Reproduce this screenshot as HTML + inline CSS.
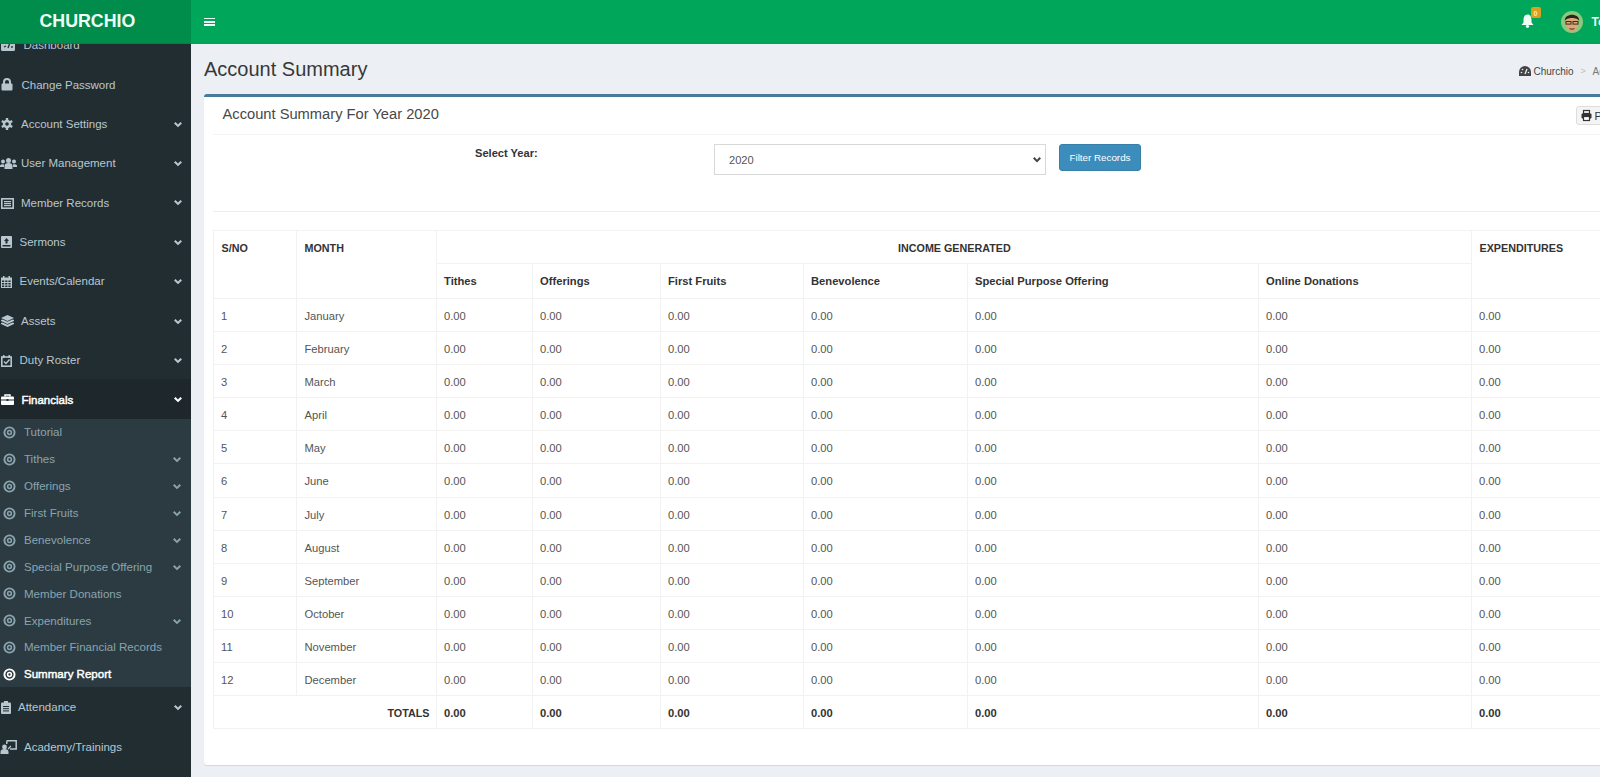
<!DOCTYPE html>
<html><head><meta charset="utf-8"><style>
*{box-sizing:border-box;margin:0;padding:0}
html,body{width:1600px;height:777px;overflow:hidden;background:#ecf0f5;font-family:"Liberation Sans",sans-serif;color:#333}
.a{position:absolute;white-space:nowrap;line-height:1}
svg.a{overflow:visible}
</style></head><body>
<div class="a" style="left:0.00px;top:44.00px;width:191.00px;height:733.00px;background:#222d32;"></div>
<div class="a" style="left:0.00px;top:379.00px;width:191.00px;height:40.00px;background:#1e282c;"></div>
<div class="a" style="left:0.00px;top:419.00px;width:191.00px;height:268.00px;background:#2c3b41;"></div>
<svg class="a" style="left:1px;top:39.50px" width="14" height="11" viewBox="0 0 14 11"><rect x="0" y="0" width="14" height="11" rx="1.5" fill="#b8c7ce"/><path d="M3 7 L5 6 M7 8 L8.5 4" stroke="#222d32" stroke-width="1.3"/><circle cx="11" cy="7" r="0.9" fill="#222d32"/></svg>
<div class="a" style="left:23.50px;top:40.17px;font-size:11.5px;font-weight:normal;color:#b8c7ce;">Dashboard</div>
<svg class="a" style="left:1px;top:78.40px" width="12" height="13"><path d="M3 6 V4 A3 3 0 0 1 9 4 V6" fill="none" stroke="#b8c7ce" stroke-width="2"/><rect x="0.5" y="5.5" width="11" height="7" rx="1" fill="#b8c7ce"/></svg>
<div class="a" style="left:21.50px;top:79.57px;font-size:11.5px;font-weight:normal;color:#b8c7ce;">Change Password</div>
<svg class="a" style="left:1px;top:118.30px" width="12" height="12" viewBox="0 0 12 12"><circle cx="6" cy="6" r="4.2" fill="#b8c7ce"/><rect x="4.8" y="0" width="2.4" height="12" fill="#b8c7ce" transform="rotate(0 6 6)"/><rect x="4.8" y="0" width="2.4" height="12" fill="#b8c7ce" transform="rotate(60 6 6)"/><rect x="4.8" y="0" width="2.4" height="12" fill="#b8c7ce" transform="rotate(120 6 6)"/><circle cx="6" cy="6" r="1.8" fill="#222d32"/></svg>
<div class="a" style="left:21.00px;top:118.97px;font-size:11.5px;font-weight:normal;color:#b8c7ce;">Account Settings</div>
<svg class="a" style="left:174.00px;top:121.70px" width="8" height="5.2" viewBox="0 0 8 5.2"><path d="M0 1.51 L1.51 0 L4.00 2.63 L6.49 0 L8 1.51 L4.00 5.2 Z" fill="#b8c7ce"/></svg>
<svg class="a" style="left:0px;top:158.20px" width="17" height="11" viewBox="0 0 17 11"><circle cx="8.5" cy="2.6" r="2.5" fill="#b8c7ce"/><circle cx="3" cy="3.5" r="2" fill="#b8c7ce"/><circle cx="14" cy="3.5" r="2" fill="#b8c7ce"/><path d="M4.5 11 V8 A4 3 0 0 1 12.5 8 V11 Z" fill="#b8c7ce"/><path d="M0 9 V7.5 A3 2 0 0 1 4 6.5 V9Z" fill="#b8c7ce"/><path d="M13 6.5 A3 2 0 0 1 17 7.5 V9 H13Z" fill="#b8c7ce"/></svg>
<div class="a" style="left:21.00px;top:158.37px;font-size:11.5px;font-weight:normal;color:#b8c7ce;">User Management</div>
<svg class="a" style="left:174.00px;top:161.10px" width="8" height="5.2" viewBox="0 0 8 5.2"><path d="M0 1.51 L1.51 0 L4.00 2.63 L6.49 0 L8 1.51 L4.00 5.2 Z" fill="#b8c7ce"/></svg>
<svg class="a" style="left:1px;top:197.50px" width="13" height="11" viewBox="0 0 13 11"><rect x="0.8" y="0.8" width="11.4" height="9.4" fill="none" stroke="#b8c7ce" stroke-width="1.6"/><rect x="3" y="3" width="7" height="1.2" fill="#b8c7ce"/><rect x="3" y="5" width="7" height="1.2" fill="#b8c7ce"/><rect x="3" y="7" width="7" height="1.2" fill="#b8c7ce"/></svg>
<div class="a" style="left:21.00px;top:197.67px;font-size:11.5px;font-weight:normal;color:#b8c7ce;">Member Records</div>
<svg class="a" style="left:174.00px;top:200.40px" width="8" height="5.2" viewBox="0 0 8 5.2"><path d="M0 1.51 L1.51 0 L4.00 2.63 L6.49 0 L8 1.51 L4.00 5.2 Z" fill="#b8c7ce"/></svg>
<svg class="a" style="left:1px;top:236.40px" width="11" height="12" viewBox="0 0 11 12"><rect x="0" y="0" width="11" height="12" rx="1" fill="#b8c7ce"/><rect x="1.5" y="9" width="8" height="1.5" fill="#222d32"/><path d="M5.5 2 L8 5 H6.5 V7.5 H4.5 V5 H3Z" fill="#222d32"/></svg>
<div class="a" style="left:19.50px;top:237.07px;font-size:11.5px;font-weight:normal;color:#b8c7ce;">Sermons</div>
<svg class="a" style="left:174.00px;top:239.80px" width="8" height="5.2" viewBox="0 0 8 5.2"><path d="M0 1.51 L1.51 0 L4.00 2.63 L6.49 0 L8 1.51 L4.00 5.2 Z" fill="#b8c7ce"/></svg>
<svg class="a" style="left:1px;top:275.80px" width="11" height="12" viewBox="0 0 11 12"><rect x="0" y="1.5" width="11" height="10.5" fill="#b8c7ce"/><rect x="2" y="0" width="1.5" height="2.5" fill="#b8c7ce"/><rect x="7.5" y="0" width="1.5" height="2.5" fill="#b8c7ce"/><rect x="1.0" y="4.5" width="2.2" height="1.5" fill="#222d32"/><rect x="1.0" y="7.0" width="2.2" height="1.5" fill="#222d32"/><rect x="1.0" y="9.5" width="2.2" height="1.5" fill="#222d32"/><rect x="4.2" y="4.5" width="2.2" height="1.5" fill="#222d32"/><rect x="4.2" y="7.0" width="2.2" height="1.5" fill="#222d32"/><rect x="4.2" y="9.5" width="2.2" height="1.5" fill="#222d32"/><rect x="7.4" y="4.5" width="2.2" height="1.5" fill="#222d32"/><rect x="7.4" y="7.0" width="2.2" height="1.5" fill="#222d32"/><rect x="7.4" y="9.5" width="2.2" height="1.5" fill="#222d32"/></svg>
<div class="a" style="left:19.50px;top:276.47px;font-size:11.5px;font-weight:normal;color:#b8c7ce;">Events/Calendar</div>
<svg class="a" style="left:174.00px;top:279.20px" width="8" height="5.2" viewBox="0 0 8 5.2"><path d="M0 1.51 L1.51 0 L4.00 2.63 L6.49 0 L8 1.51 L4.00 5.2 Z" fill="#b8c7ce"/></svg>
<svg class="a" style="left:1px;top:315.20px" width="13" height="12" viewBox="0 0 13 12"><path d="M6.5 0 L13 3 L6.5 6 L0 3Z" fill="#b8c7ce"/><path d="M0 5 L1.5 4.4 L6.5 6.8 L11.5 4.4 L13 5 V6 L6.5 9 L0 6Z" fill="#b8c7ce"/><path d="M0 8 L1.5 7.4 L6.5 9.8 L11.5 7.4 L13 8 V9 L6.5 12 L0 9Z" fill="#b8c7ce"/></svg>
<div class="a" style="left:21.00px;top:315.87px;font-size:11.5px;font-weight:normal;color:#b8c7ce;">Assets</div>
<svg class="a" style="left:174.00px;top:318.60px" width="8" height="5.2" viewBox="0 0 8 5.2"><path d="M0 1.51 L1.51 0 L4.00 2.63 L6.49 0 L8 1.51 L4.00 5.2 Z" fill="#b8c7ce"/></svg>
<svg class="a" style="left:1px;top:354.60px" width="11" height="12" viewBox="0 0 11 12"><rect x="0.8" y="2" width="9.4" height="9.2" fill="none" stroke="#b8c7ce" stroke-width="1.6"/><rect x="2" y="0" width="1.5" height="3" fill="#b8c7ce"/><rect x="7.5" y="0" width="1.5" height="3" fill="#b8c7ce"/><path d="M3 6.5 L5 8.5 L8.5 4.5" fill="none" stroke="#b8c7ce" stroke-width="1.4"/></svg>
<div class="a" style="left:19.50px;top:355.27px;font-size:11.5px;font-weight:normal;color:#b8c7ce;">Duty Roster</div>
<svg class="a" style="left:174.00px;top:358.00px" width="8" height="5.2" viewBox="0 0 8 5.2"><path d="M0 1.51 L1.51 0 L4.00 2.63 L6.49 0 L8 1.51 L4.00 5.2 Z" fill="#b8c7ce"/></svg>
<svg class="a" style="left:1px;top:394.40px" width="13" height="11" viewBox="0 0 13 11"><path d="M4 2.5 V1 H9 V2.5" fill="none" stroke="#fff" stroke-width="1.5"/><rect x="0" y="2.5" width="13" height="8.5" rx="1" fill="#fff"/><rect x="0" y="5.5" width="13" height="1" fill="#222d32"/><rect x="5.5" y="5" width="2" height="2" fill="#222d32"/></svg>
<div class="a" style="left:21.50px;top:394.57px;font-size:11.5px;font-weight:normal;color:#fff;-webkit-text-stroke:0.45px #fff">Financials</div>
<svg class="a" style="left:174.00px;top:397.30px" width="8" height="5.2" viewBox="0 0 8 5.2"><path d="M0 1.51 L1.51 0 L4.00 2.63 L6.49 0 L8 1.51 L4.00 5.2 Z" fill="#fff"/></svg>
<svg class="a" style="left:1px;top:701.30px" width="10" height="13" viewBox="0 0 10 13"><rect x="0" y="1.5" width="10" height="11.5" rx="1" fill="#b8c7ce"/><rect x="3" y="0" width="4" height="3" fill="#b8c7ce"/><rect x="2" y="5.0" width="6" height="1" fill="#222d32"/><rect x="2" y="7.2" width="6" height="1" fill="#222d32"/><rect x="2" y="9.4" width="6" height="1" fill="#222d32"/></svg>
<div class="a" style="left:18.00px;top:702.47px;font-size:11.5px;font-weight:normal;color:#b8c7ce;">Attendance</div>
<svg class="a" style="left:174.00px;top:705.20px" width="8" height="5.2" viewBox="0 0 8 5.2"><path d="M0 1.51 L1.51 0 L4.00 2.63 L6.49 0 L8 1.51 L4.00 5.2 Z" fill="#b8c7ce"/></svg>
<svg class="a" style="left:0px;top:740.10px" width="17" height="14" viewBox="0 0 17 14"><path d="M6.8 0.8 H16.2 V9 H10" fill="none" stroke="#b8c7ce" stroke-width="1.5"/><path d="M6.8 0.8 V4" fill="none" stroke="#b8c7ce" stroke-width="1.5"/><path d="M8 9 L11 6" stroke="#b8c7ce" stroke-width="1.3"/><circle cx="4.5" cy="7" r="2.4" fill="#b8c7ce"/><path d="M0.5 14 V12 A4 3 0 0 1 8.5 12 V14Z" fill="#b8c7ce"/></svg>
<div class="a" style="left:24.00px;top:741.77px;font-size:11.5px;font-weight:normal;color:#b8c7ce;">Academy/Trainings</div>
<svg class="a" style="left:3.3px;top:425.90px" width="13" height="13" viewBox="0 0 13 13"><circle cx="6.5" cy="6.5" r="5.1" fill="none" stroke="#8aa4af" stroke-width="1.9"/><circle cx="6.5" cy="6.5" r="1.9" fill="none" stroke="#8aa4af" stroke-width="1.5"/></svg>
<div class="a" style="left:24.00px;top:427.22px;font-size:11.55px;font-weight:normal;color:#8aa4af;">Tutorial</div>
<svg class="a" style="left:3.3px;top:452.80px" width="13" height="13" viewBox="0 0 13 13"><circle cx="6.5" cy="6.5" r="5.1" fill="none" stroke="#8aa4af" stroke-width="1.9"/><circle cx="6.5" cy="6.5" r="1.9" fill="none" stroke="#8aa4af" stroke-width="1.5"/></svg>
<div class="a" style="left:24.00px;top:454.12px;font-size:11.55px;font-weight:normal;color:#8aa4af;">Tithes</div>
<svg class="a" style="left:173.00px;top:457.10px" width="8" height="5.2" viewBox="0 0 8 5.2"><path d="M0 1.44 L1.44 0 L4.00 2.75 L6.56 0 L8 1.44 L4.00 5.2 Z" fill="#8aa4af"/></svg>
<svg class="a" style="left:3.3px;top:479.70px" width="13" height="13" viewBox="0 0 13 13"><circle cx="6.5" cy="6.5" r="5.1" fill="none" stroke="#8aa4af" stroke-width="1.9"/><circle cx="6.5" cy="6.5" r="1.9" fill="none" stroke="#8aa4af" stroke-width="1.5"/></svg>
<div class="a" style="left:24.00px;top:481.02px;font-size:11.55px;font-weight:normal;color:#8aa4af;">Offerings</div>
<svg class="a" style="left:173.00px;top:484.00px" width="8" height="5.2" viewBox="0 0 8 5.2"><path d="M0 1.44 L1.44 0 L4.00 2.75 L6.56 0 L8 1.44 L4.00 5.2 Z" fill="#8aa4af"/></svg>
<svg class="a" style="left:3.3px;top:506.60px" width="13" height="13" viewBox="0 0 13 13"><circle cx="6.5" cy="6.5" r="5.1" fill="none" stroke="#8aa4af" stroke-width="1.9"/><circle cx="6.5" cy="6.5" r="1.9" fill="none" stroke="#8aa4af" stroke-width="1.5"/></svg>
<div class="a" style="left:24.00px;top:507.92px;font-size:11.55px;font-weight:normal;color:#8aa4af;">First Fruits</div>
<svg class="a" style="left:173.00px;top:510.90px" width="8" height="5.2" viewBox="0 0 8 5.2"><path d="M0 1.44 L1.44 0 L4.00 2.75 L6.56 0 L8 1.44 L4.00 5.2 Z" fill="#8aa4af"/></svg>
<svg class="a" style="left:3.3px;top:533.50px" width="13" height="13" viewBox="0 0 13 13"><circle cx="6.5" cy="6.5" r="5.1" fill="none" stroke="#8aa4af" stroke-width="1.9"/><circle cx="6.5" cy="6.5" r="1.9" fill="none" stroke="#8aa4af" stroke-width="1.5"/></svg>
<div class="a" style="left:24.00px;top:534.82px;font-size:11.55px;font-weight:normal;color:#8aa4af;">Benevolence</div>
<svg class="a" style="left:173.00px;top:537.80px" width="8" height="5.2" viewBox="0 0 8 5.2"><path d="M0 1.44 L1.44 0 L4.00 2.75 L6.56 0 L8 1.44 L4.00 5.2 Z" fill="#8aa4af"/></svg>
<svg class="a" style="left:3.3px;top:560.40px" width="13" height="13" viewBox="0 0 13 13"><circle cx="6.5" cy="6.5" r="5.1" fill="none" stroke="#8aa4af" stroke-width="1.9"/><circle cx="6.5" cy="6.5" r="1.9" fill="none" stroke="#8aa4af" stroke-width="1.5"/></svg>
<div class="a" style="left:24.00px;top:561.72px;font-size:11.55px;font-weight:normal;color:#8aa4af;">Special Purpose Offering</div>
<svg class="a" style="left:173.00px;top:564.70px" width="8" height="5.2" viewBox="0 0 8 5.2"><path d="M0 1.44 L1.44 0 L4.00 2.75 L6.56 0 L8 1.44 L4.00 5.2 Z" fill="#8aa4af"/></svg>
<svg class="a" style="left:3.3px;top:587.30px" width="13" height="13" viewBox="0 0 13 13"><circle cx="6.5" cy="6.5" r="5.1" fill="none" stroke="#8aa4af" stroke-width="1.9"/><circle cx="6.5" cy="6.5" r="1.9" fill="none" stroke="#8aa4af" stroke-width="1.5"/></svg>
<div class="a" style="left:24.00px;top:588.62px;font-size:11.55px;font-weight:normal;color:#8aa4af;">Member Donations</div>
<svg class="a" style="left:3.3px;top:614.20px" width="13" height="13" viewBox="0 0 13 13"><circle cx="6.5" cy="6.5" r="5.1" fill="none" stroke="#8aa4af" stroke-width="1.9"/><circle cx="6.5" cy="6.5" r="1.9" fill="none" stroke="#8aa4af" stroke-width="1.5"/></svg>
<div class="a" style="left:24.00px;top:615.52px;font-size:11.55px;font-weight:normal;color:#8aa4af;">Expenditures</div>
<svg class="a" style="left:173.00px;top:618.50px" width="8" height="5.2" viewBox="0 0 8 5.2"><path d="M0 1.44 L1.44 0 L4.00 2.75 L6.56 0 L8 1.44 L4.00 5.2 Z" fill="#8aa4af"/></svg>
<svg class="a" style="left:3.3px;top:641.10px" width="13" height="13" viewBox="0 0 13 13"><circle cx="6.5" cy="6.5" r="5.1" fill="none" stroke="#8aa4af" stroke-width="1.9"/><circle cx="6.5" cy="6.5" r="1.9" fill="none" stroke="#8aa4af" stroke-width="1.5"/></svg>
<div class="a" style="left:24.00px;top:642.42px;font-size:11.55px;font-weight:normal;color:#8aa4af;">Member Financial Records</div>
<svg class="a" style="left:3.3px;top:668.00px" width="13" height="13" viewBox="0 0 13 13"><circle cx="6.5" cy="6.5" r="5.1" fill="none" stroke="#fff" stroke-width="1.9"/><circle cx="6.5" cy="6.5" r="1.9" fill="none" stroke="#fff" stroke-width="1.5"/></svg>
<div class="a" style="left:24.00px;top:669.32px;font-size:11.55px;font-weight:normal;color:#fff;-webkit-text-stroke:0.45px #fff">Summary Report</div>
<div class="a" style="left:0.00px;top:0.00px;width:191.00px;height:44.00px;background:#008d4c;"></div>
<div class="a" style="left:191.00px;top:0.00px;width:1409.00px;height:44.00px;background:#00a65a;"></div>
<div class="a" style="left:191.00px;top:43.00px;width:1409.00px;height:1.00px;background:#1f9262;"></div>
<div class="a" style="left:0.00px;top:43.00px;width:191.00px;height:1.00px;background:#0b7a45;"></div>
<div class="a" style="left:39.50px;top:13.43px;font-size:17.8px;font-weight:bold;color:#effff5;">CHURCHIO</div>
<div class="a" style="left:204.00px;top:17.50px;width:11.00px;height:1.80px;background:#effff5;"></div>
<div class="a" style="left:204.00px;top:20.80px;width:11.00px;height:1.80px;background:#effff5;"></div>
<div class="a" style="left:204.00px;top:24.10px;width:11.00px;height:1.80px;background:#effff5;"></div>
<svg class="a" style="left:1521px;top:14px" width="13" height="14" viewBox="0 0 13 14"><path d="M6.5 0.5 C3.5 0.5 2.5 3 2.5 6 V8.5 L0.5 11 H12.5 L10.5 8.5 V6 C10.5 3 9.5 0.5 6.5 0.5Z" fill="#effff5"/><circle cx="6.5" cy="12.3" r="1.6" fill="#effff5"/></svg>
<div class="a" style="left:1531.00px;top:7.00px;width:10.00px;height:11.00px;background:#dca020;border-radius:2px"></div>
<div class="a" style="left:1533.50px;top:9.57px;font-size:7px;font-weight:bold;color:#ffe9b0;">0</div>
<svg class="a" style="left:1561px;top:10.5px" width="22" height="22" viewBox="0 0 22 22"><circle cx="11" cy="11" r="11" fill="#8cc77e"/><ellipse cx="11" cy="12.5" rx="6.2" ry="7.8" fill="#dca878"/><path d="M3.8 10 C3 1.5 19 1.5 18.2 10 C17 6 5 6 3.8 10Z" fill="#2a2420"/><rect x="5" y="10.5" width="5" height="2.6" fill="none" stroke="#3a2a20" stroke-width="1"/><rect x="12" y="10.5" width="5" height="2.6" fill="none" stroke="#3a2a20" stroke-width="1"/><path d="M8.5 17.5 Q11 18.8 13.5 17.5" fill="none" stroke="#5a3a2a" stroke-width="1.2"/></svg>
<div class="a" style="left:1591.50px;top:16.04px;font-size:12px;font-weight:bold;color:#effff5;">Tom</div>
<div class="a" style="left:204.00px;top:59.07px;font-size:20px;font-weight:normal;color:#383838;">Account Summary</div>
<svg class="a" style="left:1519px;top:65.5px" width="12" height="10" viewBox="0 0 12 10"><path d="M0 10 V6 A6 6 0 0 1 12 6 V10 Z" fill="#444"/><path d="M6 8 L8 3" stroke="#ecf0f5" stroke-width="1.3"/><circle cx="2.5" cy="6.5" r="0.8" fill="#ecf0f5"/><circle cx="3.5" cy="3.5" r="0.8" fill="#ecf0f5"/><circle cx="9.5" cy="6.5" r="0.8" fill="#ecf0f5"/></svg>
<div class="a" style="left:1533.50px;top:66.53px;font-size:10px;font-weight:normal;color:#444;">Churchio</div>
<div class="a" style="left:1580.50px;top:67.38px;font-size:9px;font-weight:normal;color:#bbb;">&gt;</div>
<div class="a" style="left:1592.50px;top:66.53px;font-size:10px;font-weight:normal;color:#777;">Account Summary</div>
<div class="a" style="left:204.00px;top:94.00px;width:1420.00px;height:671.00px;background:#fff;border-top:3px solid #467c9a;border-radius:3px;box-shadow:0 1px 1px rgba(0,0,0,0.1)"></div>
<div class="a" style="left:222.50px;top:106.96px;font-size:14.7px;font-weight:normal;color:#484848;">Account Summary For Year 2020</div>
<div class="a" style="left:213.00px;top:133.50px;width:1400.00px;height:1.00px;background:#f4f4f4;"></div>
<div class="a" style="left:1576.00px;top:105.50px;width:60.00px;height:19.50px;background:#f4f4f4;border:1px solid #ddd;border-radius:3px"></div>
<svg class="a" style="left:1581px;top:109.5px" width="11" height="11" viewBox="0 0 11 11"><rect x="2.5" y="0.5" width="6" height="3" fill="none" stroke="#333" stroke-width="1.2"/><rect x="0.5" y="3.5" width="10" height="5" rx="1" fill="#333"/><rect x="2.5" y="6.5" width="6" height="4" fill="#fff" stroke="#333" stroke-width="1.2"/></svg>
<div class="a" style="left:1594.50px;top:111.19px;font-size:11px;font-weight:normal;color:#333;">Print</div>
<div class="a" style="left:475.00px;top:147.80px;font-size:11.1px;font-weight:bold;color:#333;">Select Year:</div>
<div class="a" style="left:713.50px;top:144.00px;width:332.50px;height:30.50px;background:#fff;border:1px solid #d8d8d8"></div>
<div class="a" style="left:729.00px;top:154.60px;font-size:11.1px;font-weight:normal;color:#555;">2020</div>
<svg class="a" style="left:1033.00px;top:156.60px" width="8" height="5.4" viewBox="0 0 8 5.4"><path d="M0 1.58 L1.58 0 L4.00 2.71 L6.42 0 L8 1.58 L4.00 5.4 Z" fill="#444"/></svg>
<div class="a" style="left:1059.00px;top:144.00px;width:82.00px;height:27.00px;background:#3c8dbc;border:1px solid #367fa9;border-radius:3px"></div>
<div class="a" style="left:1069.50px;top:152.50px;font-size:9.8px;font-weight:normal;color:#fff;">Filter Records</div>
<div class="a" style="left:213.00px;top:210.50px;width:1400.00px;height:1.00px;background:#eee;"></div>
<div class="a" style="left:213.00px;top:230.00px;width:1400.00px;height:1.00px;background:#f2f2f2;"></div>
<div class="a" style="left:436.50px;top:263.00px;width:1034.50px;height:1.00px;background:#f2f2f2;"></div>
<div class="a" style="left:213.00px;top:298.00px;width:1400.00px;height:1.00px;background:#f2f2f2;"></div>
<div class="a" style="left:213.00px;top:331.00px;width:1400.00px;height:1.00px;background:#f2f2f2;"></div>
<div class="a" style="left:213.00px;top:364.00px;width:1400.00px;height:1.00px;background:#f2f2f2;"></div>
<div class="a" style="left:213.00px;top:397.00px;width:1400.00px;height:1.00px;background:#f2f2f2;"></div>
<div class="a" style="left:213.00px;top:430.00px;width:1400.00px;height:1.00px;background:#f2f2f2;"></div>
<div class="a" style="left:213.00px;top:463.00px;width:1400.00px;height:1.00px;background:#f2f2f2;"></div>
<div class="a" style="left:213.00px;top:497.00px;width:1400.00px;height:1.00px;background:#f2f2f2;"></div>
<div class="a" style="left:213.00px;top:530.00px;width:1400.00px;height:1.00px;background:#f2f2f2;"></div>
<div class="a" style="left:213.00px;top:563.00px;width:1400.00px;height:1.00px;background:#f2f2f2;"></div>
<div class="a" style="left:213.00px;top:596.00px;width:1400.00px;height:1.00px;background:#f2f2f2;"></div>
<div class="a" style="left:213.00px;top:629.00px;width:1400.00px;height:1.00px;background:#f2f2f2;"></div>
<div class="a" style="left:213.00px;top:662.00px;width:1400.00px;height:1.00px;background:#f2f2f2;"></div>
<div class="a" style="left:213.00px;top:695.00px;width:1400.00px;height:1.00px;background:#f2f2f2;"></div>
<div class="a" style="left:213.00px;top:728.00px;width:1400.00px;height:1.00px;background:#f2f2f2;"></div>
<div class="a" style="left:213.00px;top:230.00px;width:1.00px;height:499.00px;background:#f2f2f2;"></div>
<div class="a" style="left:296.00px;top:230.00px;width:1.00px;height:465.00px;background:#f2f2f2;"></div>
<div class="a" style="left:436.00px;top:230.00px;width:1.00px;height:499.00px;background:#f2f2f2;"></div>
<div class="a" style="left:532.00px;top:263.00px;width:1.00px;height:465.00px;background:#f2f2f2;"></div>
<div class="a" style="left:660.00px;top:263.00px;width:1.00px;height:465.00px;background:#f2f2f2;"></div>
<div class="a" style="left:803.00px;top:263.00px;width:1.00px;height:465.00px;background:#f2f2f2;"></div>
<div class="a" style="left:967.00px;top:263.00px;width:1.00px;height:465.00px;background:#f2f2f2;"></div>
<div class="a" style="left:1258.00px;top:263.00px;width:1.00px;height:465.00px;background:#f2f2f2;"></div>
<div class="a" style="left:1471.00px;top:230.00px;width:1.00px;height:499.00px;background:#f2f2f2;"></div>
<div class="a" style="left:221.50px;top:242.50px;font-size:10.75px;font-weight:bold;color:#333;">S/NO</div>
<div class="a" style="left:304.50px;top:242.50px;font-size:10.75px;font-weight:bold;color:#333;">MONTH</div>
<div class="a" style="left:898.00px;top:242.50px;font-size:10.75px;font-weight:bold;color:#333;">INCOME GENERATED</div>
<div class="a" style="left:1479.50px;top:242.50px;font-size:10.75px;font-weight:bold;color:#333;">EXPENDITURES</div>
<div class="a" style="left:444.00px;top:276.32px;font-size:11.2px;font-weight:bold;color:#333;">Tithes</div>
<div class="a" style="left:540.00px;top:276.32px;font-size:11.2px;font-weight:bold;color:#333;">Offerings</div>
<div class="a" style="left:668.00px;top:276.32px;font-size:11.2px;font-weight:bold;color:#333;">First Fruits</div>
<div class="a" style="left:811.00px;top:276.32px;font-size:11.2px;font-weight:bold;color:#333;">Benevolence</div>
<div class="a" style="left:975.00px;top:276.32px;font-size:11.2px;font-weight:bold;color:#333;">Special Purpose Offering</div>
<div class="a" style="left:1266.00px;top:276.32px;font-size:11.2px;font-weight:bold;color:#333;">Online Donations</div>
<div class="a" style="left:221.00px;top:310.72px;font-size:11.2px;font-weight:normal;color:#555;">1</div>
<div class="a" style="left:304.50px;top:310.72px;font-size:11.2px;font-weight:normal;color:#555;">January</div>
<div class="a" style="left:444.00px;top:310.72px;font-size:11.2px;font-weight:normal;color:#555;">0.00</div>
<div class="a" style="left:540.00px;top:310.72px;font-size:11.2px;font-weight:normal;color:#555;">0.00</div>
<div class="a" style="left:668.00px;top:310.72px;font-size:11.2px;font-weight:normal;color:#555;">0.00</div>
<div class="a" style="left:811.00px;top:310.72px;font-size:11.2px;font-weight:normal;color:#555;">0.00</div>
<div class="a" style="left:975.00px;top:310.72px;font-size:11.2px;font-weight:normal;color:#555;">0.00</div>
<div class="a" style="left:1266.00px;top:310.72px;font-size:11.2px;font-weight:normal;color:#555;">0.00</div>
<div class="a" style="left:1479.00px;top:310.72px;font-size:11.2px;font-weight:normal;color:#555;">0.00</div>
<div class="a" style="left:221.00px;top:343.85px;font-size:11.2px;font-weight:normal;color:#555;">2</div>
<div class="a" style="left:304.50px;top:343.85px;font-size:11.2px;font-weight:normal;color:#555;">February</div>
<div class="a" style="left:444.00px;top:343.85px;font-size:11.2px;font-weight:normal;color:#555;">0.00</div>
<div class="a" style="left:540.00px;top:343.85px;font-size:11.2px;font-weight:normal;color:#555;">0.00</div>
<div class="a" style="left:668.00px;top:343.85px;font-size:11.2px;font-weight:normal;color:#555;">0.00</div>
<div class="a" style="left:811.00px;top:343.85px;font-size:11.2px;font-weight:normal;color:#555;">0.00</div>
<div class="a" style="left:975.00px;top:343.85px;font-size:11.2px;font-weight:normal;color:#555;">0.00</div>
<div class="a" style="left:1266.00px;top:343.85px;font-size:11.2px;font-weight:normal;color:#555;">0.00</div>
<div class="a" style="left:1479.00px;top:343.85px;font-size:11.2px;font-weight:normal;color:#555;">0.00</div>
<div class="a" style="left:221.00px;top:376.98px;font-size:11.2px;font-weight:normal;color:#555;">3</div>
<div class="a" style="left:304.50px;top:376.98px;font-size:11.2px;font-weight:normal;color:#555;">March</div>
<div class="a" style="left:444.00px;top:376.98px;font-size:11.2px;font-weight:normal;color:#555;">0.00</div>
<div class="a" style="left:540.00px;top:376.98px;font-size:11.2px;font-weight:normal;color:#555;">0.00</div>
<div class="a" style="left:668.00px;top:376.98px;font-size:11.2px;font-weight:normal;color:#555;">0.00</div>
<div class="a" style="left:811.00px;top:376.98px;font-size:11.2px;font-weight:normal;color:#555;">0.00</div>
<div class="a" style="left:975.00px;top:376.98px;font-size:11.2px;font-weight:normal;color:#555;">0.00</div>
<div class="a" style="left:1266.00px;top:376.98px;font-size:11.2px;font-weight:normal;color:#555;">0.00</div>
<div class="a" style="left:1479.00px;top:376.98px;font-size:11.2px;font-weight:normal;color:#555;">0.00</div>
<div class="a" style="left:221.00px;top:410.11px;font-size:11.2px;font-weight:normal;color:#555;">4</div>
<div class="a" style="left:304.50px;top:410.11px;font-size:11.2px;font-weight:normal;color:#555;">April</div>
<div class="a" style="left:444.00px;top:410.11px;font-size:11.2px;font-weight:normal;color:#555;">0.00</div>
<div class="a" style="left:540.00px;top:410.11px;font-size:11.2px;font-weight:normal;color:#555;">0.00</div>
<div class="a" style="left:668.00px;top:410.11px;font-size:11.2px;font-weight:normal;color:#555;">0.00</div>
<div class="a" style="left:811.00px;top:410.11px;font-size:11.2px;font-weight:normal;color:#555;">0.00</div>
<div class="a" style="left:975.00px;top:410.11px;font-size:11.2px;font-weight:normal;color:#555;">0.00</div>
<div class="a" style="left:1266.00px;top:410.11px;font-size:11.2px;font-weight:normal;color:#555;">0.00</div>
<div class="a" style="left:1479.00px;top:410.11px;font-size:11.2px;font-weight:normal;color:#555;">0.00</div>
<div class="a" style="left:221.00px;top:443.24px;font-size:11.2px;font-weight:normal;color:#555;">5</div>
<div class="a" style="left:304.50px;top:443.24px;font-size:11.2px;font-weight:normal;color:#555;">May</div>
<div class="a" style="left:444.00px;top:443.24px;font-size:11.2px;font-weight:normal;color:#555;">0.00</div>
<div class="a" style="left:540.00px;top:443.24px;font-size:11.2px;font-weight:normal;color:#555;">0.00</div>
<div class="a" style="left:668.00px;top:443.24px;font-size:11.2px;font-weight:normal;color:#555;">0.00</div>
<div class="a" style="left:811.00px;top:443.24px;font-size:11.2px;font-weight:normal;color:#555;">0.00</div>
<div class="a" style="left:975.00px;top:443.24px;font-size:11.2px;font-weight:normal;color:#555;">0.00</div>
<div class="a" style="left:1266.00px;top:443.24px;font-size:11.2px;font-weight:normal;color:#555;">0.00</div>
<div class="a" style="left:1479.00px;top:443.24px;font-size:11.2px;font-weight:normal;color:#555;">0.00</div>
<div class="a" style="left:221.00px;top:476.37px;font-size:11.2px;font-weight:normal;color:#555;">6</div>
<div class="a" style="left:304.50px;top:476.37px;font-size:11.2px;font-weight:normal;color:#555;">June</div>
<div class="a" style="left:444.00px;top:476.37px;font-size:11.2px;font-weight:normal;color:#555;">0.00</div>
<div class="a" style="left:540.00px;top:476.37px;font-size:11.2px;font-weight:normal;color:#555;">0.00</div>
<div class="a" style="left:668.00px;top:476.37px;font-size:11.2px;font-weight:normal;color:#555;">0.00</div>
<div class="a" style="left:811.00px;top:476.37px;font-size:11.2px;font-weight:normal;color:#555;">0.00</div>
<div class="a" style="left:975.00px;top:476.37px;font-size:11.2px;font-weight:normal;color:#555;">0.00</div>
<div class="a" style="left:1266.00px;top:476.37px;font-size:11.2px;font-weight:normal;color:#555;">0.00</div>
<div class="a" style="left:1479.00px;top:476.37px;font-size:11.2px;font-weight:normal;color:#555;">0.00</div>
<div class="a" style="left:221.00px;top:509.50px;font-size:11.2px;font-weight:normal;color:#555;">7</div>
<div class="a" style="left:304.50px;top:509.50px;font-size:11.2px;font-weight:normal;color:#555;">July</div>
<div class="a" style="left:444.00px;top:509.50px;font-size:11.2px;font-weight:normal;color:#555;">0.00</div>
<div class="a" style="left:540.00px;top:509.50px;font-size:11.2px;font-weight:normal;color:#555;">0.00</div>
<div class="a" style="left:668.00px;top:509.50px;font-size:11.2px;font-weight:normal;color:#555;">0.00</div>
<div class="a" style="left:811.00px;top:509.50px;font-size:11.2px;font-weight:normal;color:#555;">0.00</div>
<div class="a" style="left:975.00px;top:509.50px;font-size:11.2px;font-weight:normal;color:#555;">0.00</div>
<div class="a" style="left:1266.00px;top:509.50px;font-size:11.2px;font-weight:normal;color:#555;">0.00</div>
<div class="a" style="left:1479.00px;top:509.50px;font-size:11.2px;font-weight:normal;color:#555;">0.00</div>
<div class="a" style="left:221.00px;top:542.63px;font-size:11.2px;font-weight:normal;color:#555;">8</div>
<div class="a" style="left:304.50px;top:542.63px;font-size:11.2px;font-weight:normal;color:#555;">August</div>
<div class="a" style="left:444.00px;top:542.63px;font-size:11.2px;font-weight:normal;color:#555;">0.00</div>
<div class="a" style="left:540.00px;top:542.63px;font-size:11.2px;font-weight:normal;color:#555;">0.00</div>
<div class="a" style="left:668.00px;top:542.63px;font-size:11.2px;font-weight:normal;color:#555;">0.00</div>
<div class="a" style="left:811.00px;top:542.63px;font-size:11.2px;font-weight:normal;color:#555;">0.00</div>
<div class="a" style="left:975.00px;top:542.63px;font-size:11.2px;font-weight:normal;color:#555;">0.00</div>
<div class="a" style="left:1266.00px;top:542.63px;font-size:11.2px;font-weight:normal;color:#555;">0.00</div>
<div class="a" style="left:1479.00px;top:542.63px;font-size:11.2px;font-weight:normal;color:#555;">0.00</div>
<div class="a" style="left:221.00px;top:575.76px;font-size:11.2px;font-weight:normal;color:#555;">9</div>
<div class="a" style="left:304.50px;top:575.76px;font-size:11.2px;font-weight:normal;color:#555;">September</div>
<div class="a" style="left:444.00px;top:575.76px;font-size:11.2px;font-weight:normal;color:#555;">0.00</div>
<div class="a" style="left:540.00px;top:575.76px;font-size:11.2px;font-weight:normal;color:#555;">0.00</div>
<div class="a" style="left:668.00px;top:575.76px;font-size:11.2px;font-weight:normal;color:#555;">0.00</div>
<div class="a" style="left:811.00px;top:575.76px;font-size:11.2px;font-weight:normal;color:#555;">0.00</div>
<div class="a" style="left:975.00px;top:575.76px;font-size:11.2px;font-weight:normal;color:#555;">0.00</div>
<div class="a" style="left:1266.00px;top:575.76px;font-size:11.2px;font-weight:normal;color:#555;">0.00</div>
<div class="a" style="left:1479.00px;top:575.76px;font-size:11.2px;font-weight:normal;color:#555;">0.00</div>
<div class="a" style="left:221.00px;top:608.89px;font-size:11.2px;font-weight:normal;color:#555;">10</div>
<div class="a" style="left:304.50px;top:608.89px;font-size:11.2px;font-weight:normal;color:#555;">October</div>
<div class="a" style="left:444.00px;top:608.89px;font-size:11.2px;font-weight:normal;color:#555;">0.00</div>
<div class="a" style="left:540.00px;top:608.89px;font-size:11.2px;font-weight:normal;color:#555;">0.00</div>
<div class="a" style="left:668.00px;top:608.89px;font-size:11.2px;font-weight:normal;color:#555;">0.00</div>
<div class="a" style="left:811.00px;top:608.89px;font-size:11.2px;font-weight:normal;color:#555;">0.00</div>
<div class="a" style="left:975.00px;top:608.89px;font-size:11.2px;font-weight:normal;color:#555;">0.00</div>
<div class="a" style="left:1266.00px;top:608.89px;font-size:11.2px;font-weight:normal;color:#555;">0.00</div>
<div class="a" style="left:1479.00px;top:608.89px;font-size:11.2px;font-weight:normal;color:#555;">0.00</div>
<div class="a" style="left:221.00px;top:642.02px;font-size:11.2px;font-weight:normal;color:#555;">11</div>
<div class="a" style="left:304.50px;top:642.02px;font-size:11.2px;font-weight:normal;color:#555;">November</div>
<div class="a" style="left:444.00px;top:642.02px;font-size:11.2px;font-weight:normal;color:#555;">0.00</div>
<div class="a" style="left:540.00px;top:642.02px;font-size:11.2px;font-weight:normal;color:#555;">0.00</div>
<div class="a" style="left:668.00px;top:642.02px;font-size:11.2px;font-weight:normal;color:#555;">0.00</div>
<div class="a" style="left:811.00px;top:642.02px;font-size:11.2px;font-weight:normal;color:#555;">0.00</div>
<div class="a" style="left:975.00px;top:642.02px;font-size:11.2px;font-weight:normal;color:#555;">0.00</div>
<div class="a" style="left:1266.00px;top:642.02px;font-size:11.2px;font-weight:normal;color:#555;">0.00</div>
<div class="a" style="left:1479.00px;top:642.02px;font-size:11.2px;font-weight:normal;color:#555;">0.00</div>
<div class="a" style="left:221.00px;top:675.15px;font-size:11.2px;font-weight:normal;color:#555;">12</div>
<div class="a" style="left:304.50px;top:675.15px;font-size:11.2px;font-weight:normal;color:#555;">December</div>
<div class="a" style="left:444.00px;top:675.15px;font-size:11.2px;font-weight:normal;color:#555;">0.00</div>
<div class="a" style="left:540.00px;top:675.15px;font-size:11.2px;font-weight:normal;color:#555;">0.00</div>
<div class="a" style="left:668.00px;top:675.15px;font-size:11.2px;font-weight:normal;color:#555;">0.00</div>
<div class="a" style="left:811.00px;top:675.15px;font-size:11.2px;font-weight:normal;color:#555;">0.00</div>
<div class="a" style="left:975.00px;top:675.15px;font-size:11.2px;font-weight:normal;color:#555;">0.00</div>
<div class="a" style="left:1266.00px;top:675.15px;font-size:11.2px;font-weight:normal;color:#555;">0.00</div>
<div class="a" style="left:1479.00px;top:675.15px;font-size:11.2px;font-weight:normal;color:#555;">0.00</div>
<div class="a" style="left:387.50px;top:708.46px;font-size:10.75px;font-weight:bold;color:#333;">TOTALS</div>
<div class="a" style="left:444.00px;top:708.08px;font-size:11.2px;font-weight:bold;color:#333;">0.00</div>
<div class="a" style="left:540.00px;top:708.08px;font-size:11.2px;font-weight:bold;color:#333;">0.00</div>
<div class="a" style="left:668.00px;top:708.08px;font-size:11.2px;font-weight:bold;color:#333;">0.00</div>
<div class="a" style="left:811.00px;top:708.08px;font-size:11.2px;font-weight:bold;color:#333;">0.00</div>
<div class="a" style="left:975.00px;top:708.08px;font-size:11.2px;font-weight:bold;color:#333;">0.00</div>
<div class="a" style="left:1266.00px;top:708.08px;font-size:11.2px;font-weight:bold;color:#333;">0.00</div>
<div class="a" style="left:1479.00px;top:708.08px;font-size:11.2px;font-weight:bold;color:#333;">0.00</div>
</body></html>
